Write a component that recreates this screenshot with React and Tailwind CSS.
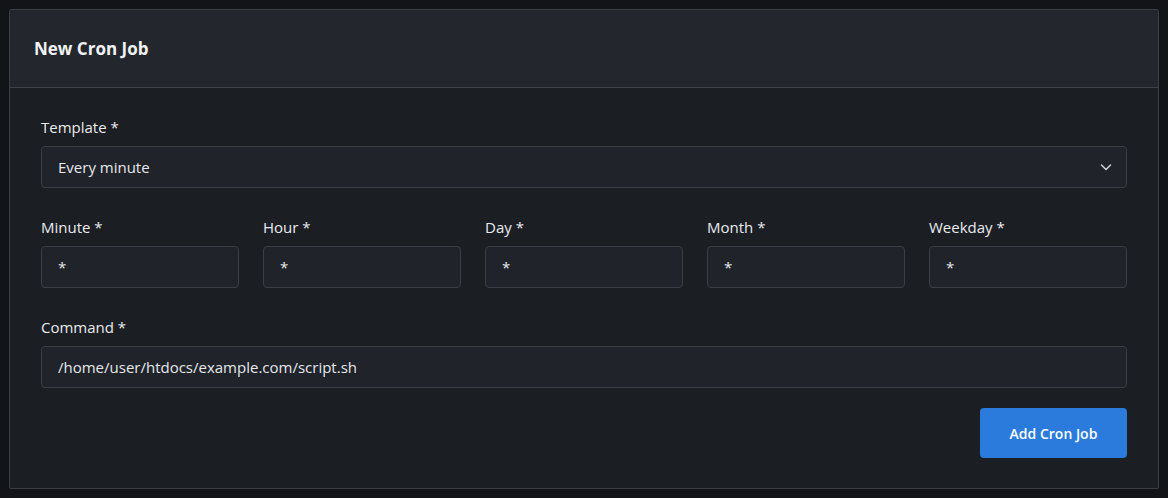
import React, { useState } from "react";

const fields = [
  { id: "minute", label: "Minute *" },
  { id: "hour", label: "Hour *" },
  { id: "day", label: "Day *" },
  { id: "month", label: "Month *" },
  { id: "weekday", label: "Weekday *" },
];

const inputCls =
  "w-full h-[42px] px-4 rounded-[4px] bg-[#20232a] border border-[#3a3e45] text-[15px] text-[#e6e8eb] outline-none";

const App = () => {
  const [values, setValues] = useState({
    minute: "*",
    hour: "*",
    day: "*",
    month: "*",
    weekday: "*",
  });
  const [command, setCommand] = useState("/home/user/htdocs/example.com/script.sh");

  return (
    <div
      className="min-h-screen bg-[#121418] p-[9px]"
      style={{ fontFamily: '"Open Sans", "Noto Sans", sans-serif' }}
    >
      <div className="border border-[#3a3d43] rounded-[2px] bg-[#1b1e23]">
        {/* Header */}
        <div className="h-[78px] px-6 flex items-center bg-[#23262c] border-b border-[#3f4349]">
          <h2 className="text-[17px] font-bold text-[#f1f3f5]">New Cron Job</h2>
        </div>

        {/* Body */}
        <div className="px-[31px] pt-[29px] pb-[30px] flex flex-col">
          <label className="text-[15px] text-[#e9ebee] leading-[20px] mb-[9px]">Template *</label>
          <div className="relative">
            <select className={`${inputCls} appearance-none`}>
              <option>Every minute</option>
            </select>
            <svg
              className="absolute right-[15px] top-[15px] w-3 h-3 text-[#c9ccd1] pointer-events-none"
              viewBox="0 0 12 12"
              fill="none"
              stroke="currentColor"
              strokeWidth="1.6"
              strokeLinecap="round"
              strokeLinejoin="round"
            >
              <path d="M1.5 4l4.5 4.5L10.5 4" />
            </svg>
          </div>

          <div className="grid grid-cols-5 gap-6 mt-[29px]">
            {fields.map((f) => (
              <div key={f.id} className="flex flex-col">
                <label className="text-[15px] text-[#e9ebee] leading-[20px] mb-[9px]">{f.label}</label>
                <input
                  className={inputCls}
                  value={values[f.id]}
                  onChange={(e) => setValues((prev) => ({ ...prev, [f.id]: e.target.value }))}
                />
              </div>
            ))}
          </div>

          <label className="text-[15px] text-[#e9ebee] leading-[20px] mb-[9px] mt-[29px]">Command *</label>
          <input className={inputCls} value={command} onChange={(e) => setCommand(e.target.value)} />

          <div className="flex justify-end mt-5">
            <button className="w-[147px] h-[50px] rounded-[4px] bg-[#2a7bdc] text-white text-[14px] font-semibold">
              Add Cron Job
            </button>
          </div>
        </div>
      </div>
    </div>
  );
};

export default App;
